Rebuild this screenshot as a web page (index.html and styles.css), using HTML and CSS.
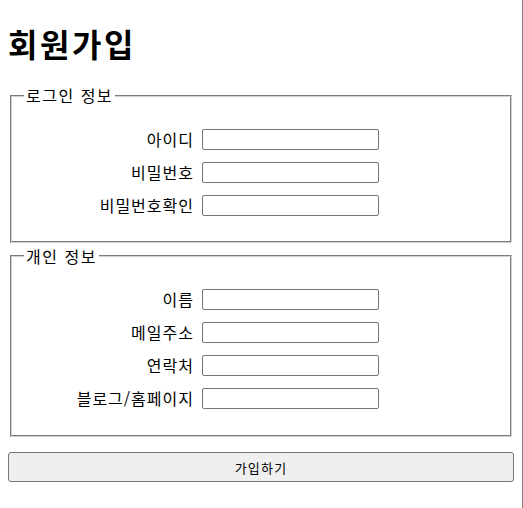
FILE: index.html
```html
<!DOCTYPE html>
<html lang="ko">
<head>
<meta charset="utf-8">
<title>회원가입</title>
<link rel="stylesheet" href="styles.css">
</head>
<body>
<h1 class="title">회원가입</h1>
<form class="join-form">
  <fieldset class="group">
    <legend class="group-title">로그인 정보</legend>
    <div class="rows">
      <label class="row-label" for="uid">아이디</label>
      <input class="row-input" id="uid" type="text">
      <label class="row-label" for="pw">비밀번호</label>
      <input class="row-input" id="pw" type="password">
      <label class="row-label" for="pw2">비밀번호확인</label>
      <input class="row-input" id="pw2" type="password">
    </div>
  </fieldset>
  <fieldset class="group group-second">
    <legend class="group-title">개인 정보</legend>
    <div class="rows rows-last">
      <label class="row-label" for="name">이름</label>
      <input class="row-input" id="name" type="text">
      <label class="row-label" for="mail">메일주소</label>
      <input class="row-input" id="mail" type="text">
      <label class="row-label" for="tel">연락처</label>
      <input class="row-input" id="tel" type="text">
      <label class="row-label" for="blog">블로그/홈페이지</label>
      <input class="row-input" id="blog" type="text">
    </div>
  </fieldset>
  <button class="submit" type="submit">가입하기</button>
</form>
</body>
</html>
```

FILE: styles.css
```css
html {
  border-right: 1px solid #7f7f7f;
  min-height: 100%;
  box-sizing: border-box;
}

body {
  margin: 0;
  padding: 0 8px 8px;
  font-family: "Noto Sans CJK KR", "Noto Sans", sans-serif;
  font-size: 16px;
  color: #000;
  background: #fff;
}

.title {
  font-size: 32px;
  line-height: 42px;
  font-weight: bold;
  letter-spacing: 2.6px;
  margin: 22px 0 21px 0;
}

.join-form {
  margin: 0;
}

.group {
  margin: 0 2px;
  border: 2px groove #d0d0d0;
  padding: 5.6px 12px 10px;
}

.group-second {
  margin-top: 3px;
}

.group-title {
  padding: 0 2px;
  font-size: 16px;
  line-height: 21px;
  letter-spacing: 1.5px;
}

.rows {
  display: grid;
  grid-template-columns: 170px 177px;
  column-gap: 8px;
  row-gap: 12px;
  align-items: center;
  margin: 17px 0 15px;
}

.rows-last {
  margin-bottom: 16px;
}

.row-label {
  text-align: right;
  line-height: 21px;
  letter-spacing: 1px;
}

.row-input {
  box-sizing: border-box;
  width: 177px;
  height: 21px;
  margin: 0;
  border: 1px solid #767676;
  border-radius: 2px;
  padding: 1px 2px;
  font: inherit;
  font-size: 13px;
}

.submit {
  display: block;
  box-sizing: border-box;
  width: 100%;
  height: 30px;
  margin-top: 15px;
  background: #efefef;
  border: 1px solid #767676;
  border-radius: 3px;
  font-family: "Noto Sans CJK KR", "Noto Sans", sans-serif;
  font-size: 13px;
  letter-spacing: 1.2px;
  color: #000;
}
```
